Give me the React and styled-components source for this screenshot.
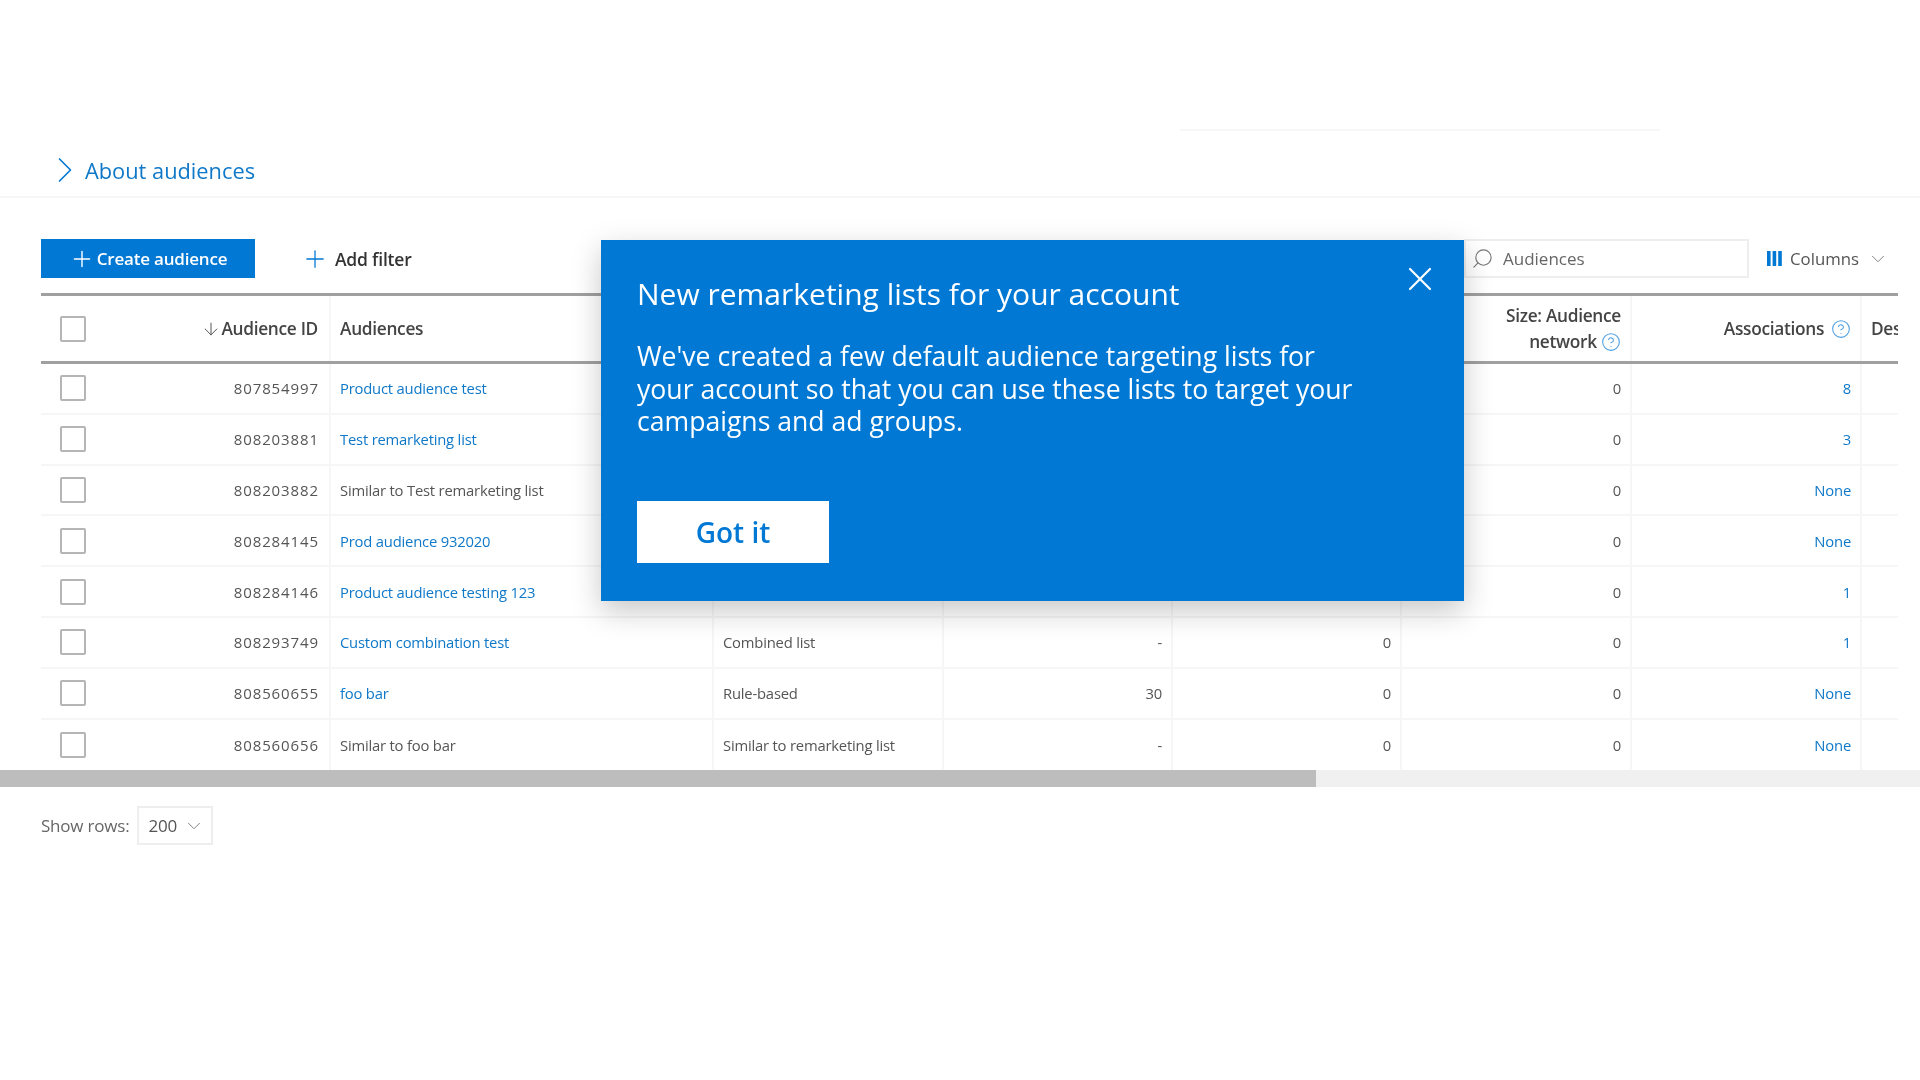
import React from "react";
import styled, { createGlobalStyle } from "styled-components";
import { ArrowDown, ChevronDown, ChevronRight, CircleHelp, Plus, Search, X } from "lucide-react";

// data
const rows = [
  { id: "807854997", name: "Product audience test", link: true, assoc: "8" },
  { id: "808203881", name: "Test remarketing list", link: true, assoc: "3" },
  { id: "808203882", name: "Similar to Test remarketing list", assoc: "None" },
  { id: "808284145", name: "Prod audience 932020", link: true, assoc: "None" },
  { id: "808284146", name: "Product audience testing 123", link: true, assoc: "1" },
  { id: "808293749", name: "Custom combination test", link: true, type: "Combined list", duration: "-", search: "0", assoc: "1" },
  { id: "808560655", name: "foo bar", link: true, type: "Rule-based", duration: "30", search: "0", assoc: "None" },
  { id: "808560656", name: "Similar to foo bar", type: "Similar to remarketing list", duration: "-", search: "0", assoc: "None" },
];

// main
const App = () => {
  return (
    <Page>
      <GlobalStyle />
      <TopHairline />
      <AboutBar>
        <AboutChevron>
          <ChevronRight size={44} strokeWidth={0.9} color="#0078d4" />
        </AboutChevron>
        <AboutLink>About audiences</AboutLink>
      </AboutBar>

      <Toolbar>
        <CreateButton>
          <Plus size={26} strokeWidth={1.3} />
          Create audience
        </CreateButton>
        <AddFilter>
          <Plus size={28} strokeWidth={1.1} color="#0078d4" />
          Add filter
        </AddFilter>
        <SearchBox>
          <FlippedIcon>
            <Search size={23} strokeWidth={1.2} color="#777" />
          </FlippedIcon>
          Audiences
        </SearchBox>
        <ColumnsButton>
          <svg width="15" height="15" viewBox="0 0 15 15" fill="#0078d4">
            <rect x="0" y="0" width="3.6" height="15" />
            <rect x="5.6" y="0" width="3.6" height="15" />
            <rect x="11.2" y="0" width="3.6" height="15" />
          </svg>
          <span>Columns</span>
          <ChevronDown size={22} strokeWidth={1} color="#777" />
        </ColumnsButton>
      </Toolbar>

      <TableArea>
        <Table>
          <HeaderRow>
            <CheckCell>
              <Checkbox />
            </CheckCell>
            <HeaderCell $right $tight>
              <ArrowDown size={20} strokeWidth={1.1} />
              Audience ID
            </HeaderCell>
            <HeaderCell>Audiences</HeaderCell>
            <HeaderCell />
            <HeaderCell />
            <HeaderCell />
            <HeaderCell $right>
              <HeaderWrap>
                Size: Audience
                <br />
                network <HelpIcon />
              </HeaderWrap>
            </HeaderCell>
            <HeaderCell $right>
              Associations <HelpIcon />
            </HeaderCell>
            <HeaderCell $last>Description</HeaderCell>
          </HeaderRow>
          {rows.map((row) => (
            <Row key={row.id}>
              <CheckCell>
                <Checkbox />
              </CheckCell>
              <IdCell>{row.id}</IdCell>
              <Cell $link={row.link}>{row.name}</Cell>
              <Cell>{row.type}</Cell>
              <Cell $right>{row.duration}</Cell>
              <Cell $right>{row.search}</Cell>
              <Cell $right>0</Cell>
              <Cell $right $link>{row.assoc}</Cell>
              <Cell $last />
            </Row>
          ))}
        </Table>
      </TableArea>

      <ScrollTrack>
        <ScrollThumb />
      </ScrollTrack>

      <Footer>
        Show rows:
        <RowSelect>
          200
          <ChevronDown size={22} strokeWidth={1} color="#777" />
        </RowSelect>
      </Footer>

      <Callout>
        <CloseButton>
          <X size={40} strokeWidth={1.3} />
        </CloseButton>
        <CalloutTitle>New remarketing lists for your account</CalloutTitle>
        <CalloutBody>
          We&apos;ve created a few default audience targeting lists for your account so that you can use these
          lists to target your campaigns and ad groups.
        </CalloutBody>
        <GotItButton>Got it</GotItButton>
      </Callout>
    </Page>
  );
};

const HelpIcon = () => (
  <HelpGlyph>
    <CircleHelp size={20} strokeWidth={1.3} color="#4f9fe0" />
  </HelpGlyph>
);

// styled
const GlobalStyle = createGlobalStyle`
  html, body {
    margin: 0;
    background: #fff;
    font-family: "Open Sans", "Liberation Sans", sans-serif;
  }
`;

const Page = styled.div`
  position: relative;
  width: 1920px;
  height: 1080px;
  overflow: hidden;
  background: #fff;
  color: #333;
  filter: blur(0.7px);
`;

const TopHairline = styled.div`
  width: 480px;
  height: 2px;
  margin-left: 1180px;
  transform: translateY(129px);
  background: #f7f7f7;
`;

const AboutBar = styled.div`
  display: flex;
  align-items: center;
  height: 68px;
  margin-top: 128px;
  padding: 14px 0 0 43px;
  border-bottom: 2px solid #f6f6f6;
  box-sizing: border-box;
`;

const AboutChevron = styled.span`
  display: flex;
  margin-right: -2px;
`;

const AboutLink = styled.span`
  font-size: 21.8px;
  color: #0f78c8;
`;

const Toolbar = styled.div`
  display: flex;
  align-items: center;
  height: 39px;
  margin: 41px 22px 0 41px;
`;

const CreateButton = styled.div`
  display: flex;
  align-items: center;
  justify-content: center;
  gap: 2px;
  width: 214px;
  height: 39px;
  background: #0078d4;
  color: #fff;
  font-size: 17px;
  font-weight: 600;
  letter-spacing: -0.2px;
`;

const AddFilter = styled.div`
  display: flex;
  align-items: center;
  gap: 6px;
  margin-left: 46px;
  font-size: 17.5px;
  font-weight: 600;
  letter-spacing: -0.2px;
  color: #333;
`;

const SearchBox = styled.div`
  display: flex;
  align-items: center;
  gap: 9px;
  width: 285px;
  height: 39px;
  margin-left: auto;
  padding-left: 5px;
  box-sizing: border-box;
  border: 2px solid #eee;
  font-size: 17px;
  color: #666;
`;

const FlippedIcon = styled.span`
  display: flex;
  transform: scaleX(-1);
`;

const ColumnsButton = styled.div`
  display: flex;
  align-items: center;
  gap: 8px;
  width: 131px;
  margin-left: 18px;
  font-size: 16.8px;
  color: #555;
`;

const TableArea = styled.div`
  margin: 15px 22px 0 41px;
  overflow: hidden;
`;

const Table = styled.div`
  width: 1960px;
  border-top: 3px solid #a0a0a0;
`;

const gridColumns = "94px 196px 383px 230px 229px 229px 230px 230px 100px";

const HeaderRow = styled.div`
  display: grid;
  grid-template-columns: ${gridColumns};
  height: 65px;
  border-bottom: 3px solid #a0a0a0;
`;

const Row = styled.div`
  display: grid;
  grid-template-columns: ${gridColumns};
  height: 50.8px;
  box-sizing: border-box;
  border-bottom: 2px solid #f6f6f6;

  &:last-child {
    border-bottom: 0;
  }
`;

const CheckCell = styled.div`
  display: flex;
  align-items: center;
  padding-left: 19px;
`;

const Checkbox = styled.div`
  width: 26px;
  height: 26px;
  box-sizing: border-box;
  border: 2px solid #b5b5b5;
  border-radius: 2px;
  background: #fff;
`;

const HeaderCell = styled.div`
  display: flex;
  align-items: center;
  justify-content: ${(props) => (props.$right ? "flex-end" : "flex-start")};
  gap: ${(props) => (props.$tight ? "0" : props.$right ? "7px" : "0")};
  padding: ${(props) => (props.$tight ? "0 11px 0 0" : props.$right ? "0 9px 0 0" : "0 0 0 9px")};
  border-right: ${(props) => (props.$last ? "0" : "2px solid #f6f6f6")};
  font-size: 17.3px;
  font-weight: 600;
  letter-spacing: -0.3px;
  color: #444;
  white-space: nowrap;
`;

const HeaderWrap = styled.div`
  text-align: right;
  line-height: 26px;
`;

const HelpGlyph = styled.span`
  display: inline-flex;
  vertical-align: -4px;
`;

const Cell = styled.div`
  display: flex;
  align-items: center;
  justify-content: ${(props) => (props.$right ? "flex-end" : "flex-start")};
  padding: ${(props) => (props.$right ? "0 9px 0 0" : "0 0 0 9px")};
  border-right: ${(props) => (props.$last ? "0" : "2px solid #f6f6f6")};
  font-size: 14.8px;
  letter-spacing: -0.2px;
  color: ${(props) => (props.$link ? "#0f78c8" : "#555")};
  white-space: nowrap;
`;

const IdCell = styled.div`
  display: flex;
  align-items: center;
  justify-content: flex-end;
  padding-right: 10px;
  border-right: 2px solid #f6f6f6;
  font-size: 15px;
  letter-spacing: 0.9px;
  color: #555;
`;

const ScrollTrack = styled.div`
  height: 17px;
  background: #f0f0f0;
`;

const ScrollThumb = styled.div`
  width: 1316px;
  height: 100%;
  background: #bdbdbd;
`;

const Footer = styled.div`
  display: flex;
  align-items: center;
  gap: 8px;
  height: 39px;
  margin: 19px 0 0 41px;
  font-size: 17px;
  letter-spacing: -0.2px;
  color: #666;
`;

const RowSelect = styled.div`
  display: flex;
  align-items: center;
  gap: 6px;
  width: 76px;
  height: 39px;
  padding-left: 9px;
  box-sizing: border-box;
  border: 2px solid #eee;
  color: #555;
`;

const Callout = styled.div`
  position: absolute;
  left: 601px;
  top: 240px;
  width: 863px;
  height: 361px;
  padding: 35px 100px 0 36px;
  box-sizing: border-box;
  background: #0078d4;
  color: #fff;
  box-shadow: 0 10px 28px rgba(0, 0, 0, 0.22);
`;

const CloseButton = styled.div`
  position: absolute;
  top: 19px;
  right: 24px;
  display: flex;
`;

const CalloutTitle = styled.div`
  font-size: 30px;
  line-height: 38px;
`;

const CalloutBody = styled.div`
  margin-top: 27px;
  font-size: 26.6px;
  line-height: 32.5px;
`;

const GotItButton = styled.div`
  display: flex;
  align-items: center;
  justify-content: center;
  width: 192px;
  height: 62px;
  margin-top: 63px;
  background: #fff;
  color: #0078d4;
  font-size: 28px;
  font-weight: 600;
`;

export default App;
